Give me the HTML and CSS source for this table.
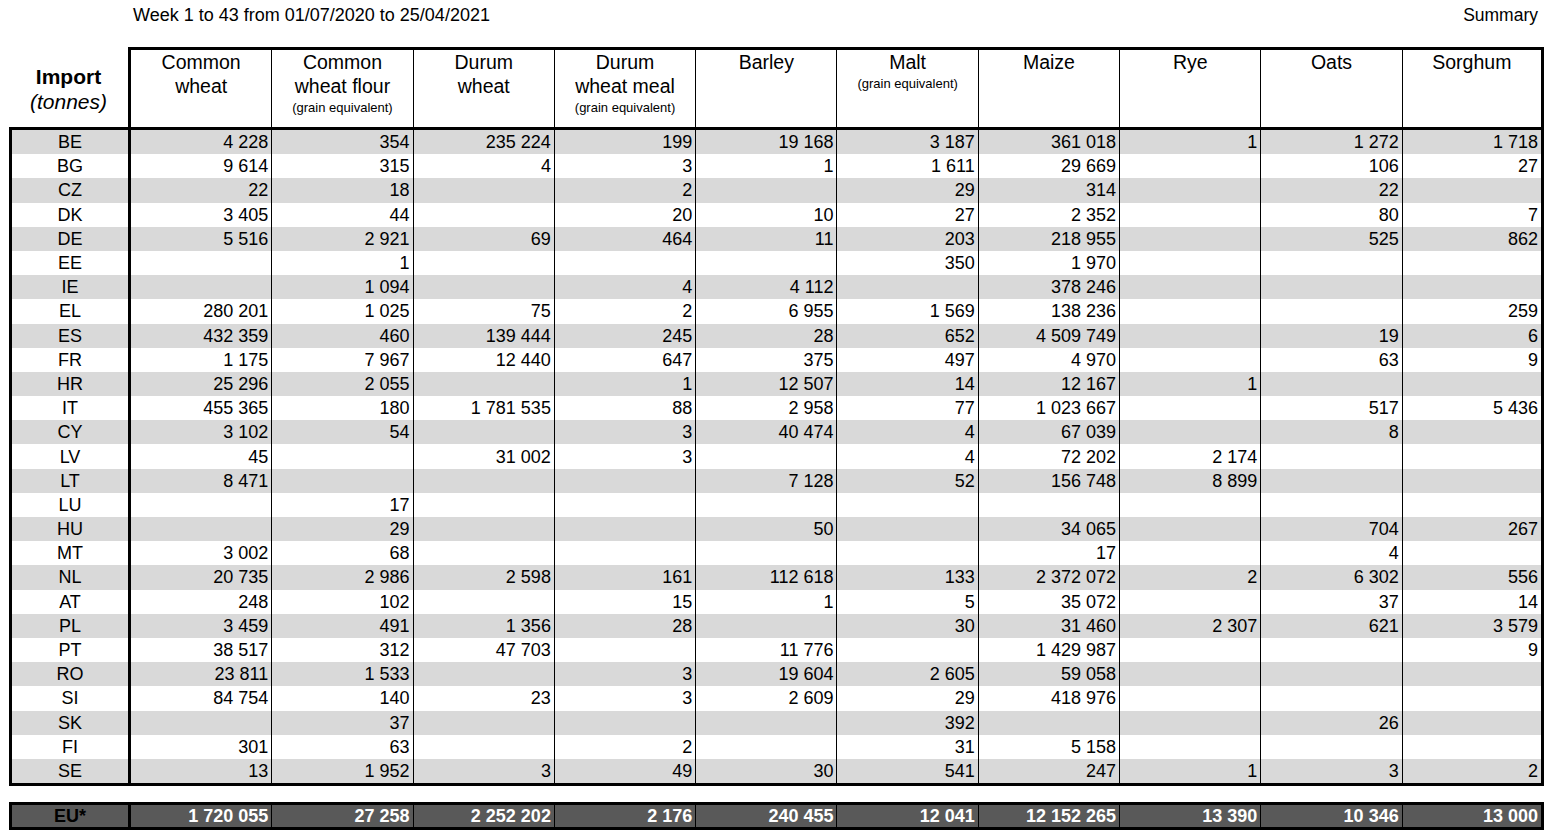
FILE: index.html
```html
<!DOCTYPE html>
<html lang="en">
<head>
<meta charset="utf-8">
<title>Import summary</title>
<link rel="stylesheet" href="styles.css">
</head>
<body>
<div class="page">
  <div class="topline">
    <span class="period">Week 1 to 43 from 01/07/2020 to 25/04/2021</span>
    <span class="summary">Summary</span>
  </div>
  <table class="grid">
    <thead>
      <tr>
        <th class="corner"><div class="imp">Import</div><div class="unit">(tonnes)</div></th>
        <th>Common<br>wheat</th>
        <th>Common<br>wheat flour<div class="note">(grain equivalent)</div></th>
        <th>Durum<br>wheat</th>
        <th>Durum<br>wheat meal<div class="note">(grain equivalent)</div></th>
        <th>Barley</th>
        <th>Malt<div class="note">(grain equivalent)</div></th>
        <th>Maize</th>
        <th>Rye</th>
        <th>Oats</th>
        <th class="last">Sorghum</th>
      </tr>
    </thead>
    <tbody>
      <tr><td class="lab">BE</td><td>4 228</td><td>354</td><td>235 224</td><td>199</td><td>19 168</td><td>3 187</td><td>361 018</td><td>1</td><td>1 272</td><td class="last">1 718</td></tr>
      <tr><td class="lab">BG</td><td>9 614</td><td>315</td><td>4</td><td>3</td><td>1</td><td>1 611</td><td>29 669</td><td></td><td>106</td><td class="last">27</td></tr>
      <tr><td class="lab">CZ</td><td>22</td><td>18</td><td></td><td>2</td><td></td><td>29</td><td>314</td><td></td><td>22</td><td class="last"></td></tr>
      <tr><td class="lab">DK</td><td>3 405</td><td>44</td><td></td><td>20</td><td>10</td><td>27</td><td>2 352</td><td></td><td>80</td><td class="last">7</td></tr>
      <tr><td class="lab">DE</td><td>5 516</td><td>2 921</td><td>69</td><td>464</td><td>11</td><td>203</td><td>218 955</td><td></td><td>525</td><td class="last">862</td></tr>
      <tr><td class="lab">EE</td><td></td><td>1</td><td></td><td></td><td></td><td>350</td><td>1 970</td><td></td><td></td><td class="last"></td></tr>
      <tr><td class="lab">IE</td><td></td><td>1 094</td><td></td><td>4</td><td>4 112</td><td></td><td>378 246</td><td></td><td></td><td class="last"></td></tr>
      <tr><td class="lab">EL</td><td>280 201</td><td>1 025</td><td>75</td><td>2</td><td>6 955</td><td>1 569</td><td>138 236</td><td></td><td></td><td class="last">259</td></tr>
      <tr><td class="lab">ES</td><td>432 359</td><td>460</td><td>139 444</td><td>245</td><td>28</td><td>652</td><td>4 509 749</td><td></td><td>19</td><td class="last">6</td></tr>
      <tr><td class="lab">FR</td><td>1 175</td><td>7 967</td><td>12 440</td><td>647</td><td>375</td><td>497</td><td>4 970</td><td></td><td>63</td><td class="last">9</td></tr>
      <tr><td class="lab">HR</td><td>25 296</td><td>2 055</td><td></td><td>1</td><td>12 507</td><td>14</td><td>12 167</td><td>1</td><td></td><td class="last"></td></tr>
      <tr><td class="lab">IT</td><td>455 365</td><td>180</td><td>1 781 535</td><td>88</td><td>2 958</td><td>77</td><td>1 023 667</td><td></td><td>517</td><td class="last">5 436</td></tr>
      <tr><td class="lab">CY</td><td>3 102</td><td>54</td><td></td><td>3</td><td>40 474</td><td>4</td><td>67 039</td><td></td><td>8</td><td class="last"></td></tr>
      <tr><td class="lab">LV</td><td>45</td><td></td><td>31 002</td><td>3</td><td></td><td>4</td><td>72 202</td><td>2 174</td><td></td><td class="last"></td></tr>
      <tr><td class="lab">LT</td><td>8 471</td><td></td><td></td><td></td><td>7 128</td><td>52</td><td>156 748</td><td>8 899</td><td></td><td class="last"></td></tr>
      <tr><td class="lab">LU</td><td></td><td>17</td><td></td><td></td><td></td><td></td><td></td><td></td><td></td><td class="last"></td></tr>
      <tr><td class="lab">HU</td><td></td><td>29</td><td></td><td></td><td>50</td><td></td><td>34 065</td><td></td><td>704</td><td class="last">267</td></tr>
      <tr><td class="lab">MT</td><td>3 002</td><td>68</td><td></td><td></td><td></td><td></td><td>17</td><td></td><td>4</td><td class="last"></td></tr>
      <tr><td class="lab">NL</td><td>20 735</td><td>2 986</td><td>2 598</td><td>161</td><td>112 618</td><td>133</td><td>2 372 072</td><td>2</td><td>6 302</td><td class="last">556</td></tr>
      <tr><td class="lab">AT</td><td>248</td><td>102</td><td></td><td>15</td><td>1</td><td>5</td><td>35 072</td><td></td><td>37</td><td class="last">14</td></tr>
      <tr><td class="lab">PL</td><td>3 459</td><td>491</td><td>1 356</td><td>28</td><td></td><td>30</td><td>31 460</td><td>2 307</td><td>621</td><td class="last">3 579</td></tr>
      <tr><td class="lab">PT</td><td>38 517</td><td>312</td><td>47 703</td><td></td><td>11 776</td><td></td><td>1 429 987</td><td></td><td></td><td class="last">9</td></tr>
      <tr><td class="lab">RO</td><td>23 811</td><td>1 533</td><td></td><td>3</td><td>19 604</td><td>2 605</td><td>59 058</td><td></td><td></td><td class="last"></td></tr>
      <tr><td class="lab">SI</td><td>84 754</td><td>140</td><td>23</td><td>3</td><td>2 609</td><td>29</td><td>418 976</td><td></td><td></td><td class="last"></td></tr>
      <tr><td class="lab">SK</td><td></td><td>37</td><td></td><td></td><td></td><td>392</td><td></td><td></td><td>26</td><td class="last"></td></tr>
      <tr><td class="lab">FI</td><td>301</td><td>63</td><td></td><td>2</td><td></td><td>31</td><td>5 158</td><td></td><td></td><td class="last"></td></tr>
      <tr class="final"><td class="lab">SE</td><td>13</td><td>1 952</td><td>3</td><td>49</td><td>30</td><td>541</td><td>247</td><td>1</td><td>3</td><td class="last">2</td></tr>
    </tbody>
  </table>
  <table class="total">
    <tbody>
      <tr><td class="lab">EU*</td><td>1 720 055</td><td>27 258</td><td>2 252 202</td><td>2 176</td><td>240 455</td><td>12 041</td><td>12 152 265</td><td>13 390</td><td>10 346</td><td class="last">13 000</td></tr>
    </tbody>
  </table>
</div>
</body>
</html>
```
FILE: styles.css
```css
html, body {
  margin: 0;
  padding: 0;
  background: #ffffff;
}

body {
  font-family: "Liberation Sans", Arial, sans-serif;
  color: #000000;
}

.page {
  width: 1548px;
}

.topline {
  display: flex;
  justify-content: space-between;
  align-items: center;
  height: 30px;
  padding: 0 10px 0 133px;
  font-size: 18px;
  box-sizing: border-box;
}

.summary {
  font-size: 17.5px;
}

table {
  border-collapse: separate;
  border-spacing: 0;
  table-layout: fixed;
  width: 1535px;
  margin-left: 9px;
}

th, td {
  box-sizing: border-box;
  padding: 0;
}

.grid {
  margin-top: 17px;
}

.grid th {
  height: 83px;
  vertical-align: top;
  text-align: center;
  font-weight: normal;
  font-size: 19.5px;
  line-height: 24px;
  padding-top: 0;
  border-top: 3px solid #000;
  border-bottom: 3px solid #000;
  border-right: 1px solid #000;
}

.grid th.corner {
  width: 122px;
  border-top: 0;
  border-right: 3px solid #000;
  vertical-align: middle;
  font-size: 21px;
  line-height: 25px;
  padding-top: 3px;
}

.imp {
  font-weight: bold;
}

.unit {
  font-style: italic;
}

.note {
  font-size: 13px;
  line-height: 20px;
}

.grid th.last,
.grid td.last,
.total td.last {
  border-right: 3px solid #000;
}

.grid td {
  height: 24.2px;
  font-size: 18px;
  line-height: 20px;
  text-align: right;
  padding-right: 3px;
  white-space: nowrap;
  border-right: 1px solid #000;
  vertical-align: middle;
}

.grid tbody tr:nth-child(odd) td {
  background: #d9d9d9;
}

.grid td.lab,
.total td.lab {
  width: 122px;
  text-align: center;
  padding-right: 0;
  border-left: 3px solid #000;
  border-right: 3px solid #000;
}

.grid tr.final td {
  height: 27.2px;
  border-bottom: 3px solid #000;
}

.total {
  margin-top: 16px;
}

.total td {
  height: 28px;
  background: #595959;
  color: #ffffff;
  font-weight: bold;
  font-size: 18px;
  line-height: 20px;
  text-align: right;
  padding-right: 3px;
  white-space: nowrap;
  border-top: 3px solid #000;
  border-bottom: 3px solid #000;
  border-right: 1px solid #000;
}

.total td.lab {
  color: #000000;
}
```
